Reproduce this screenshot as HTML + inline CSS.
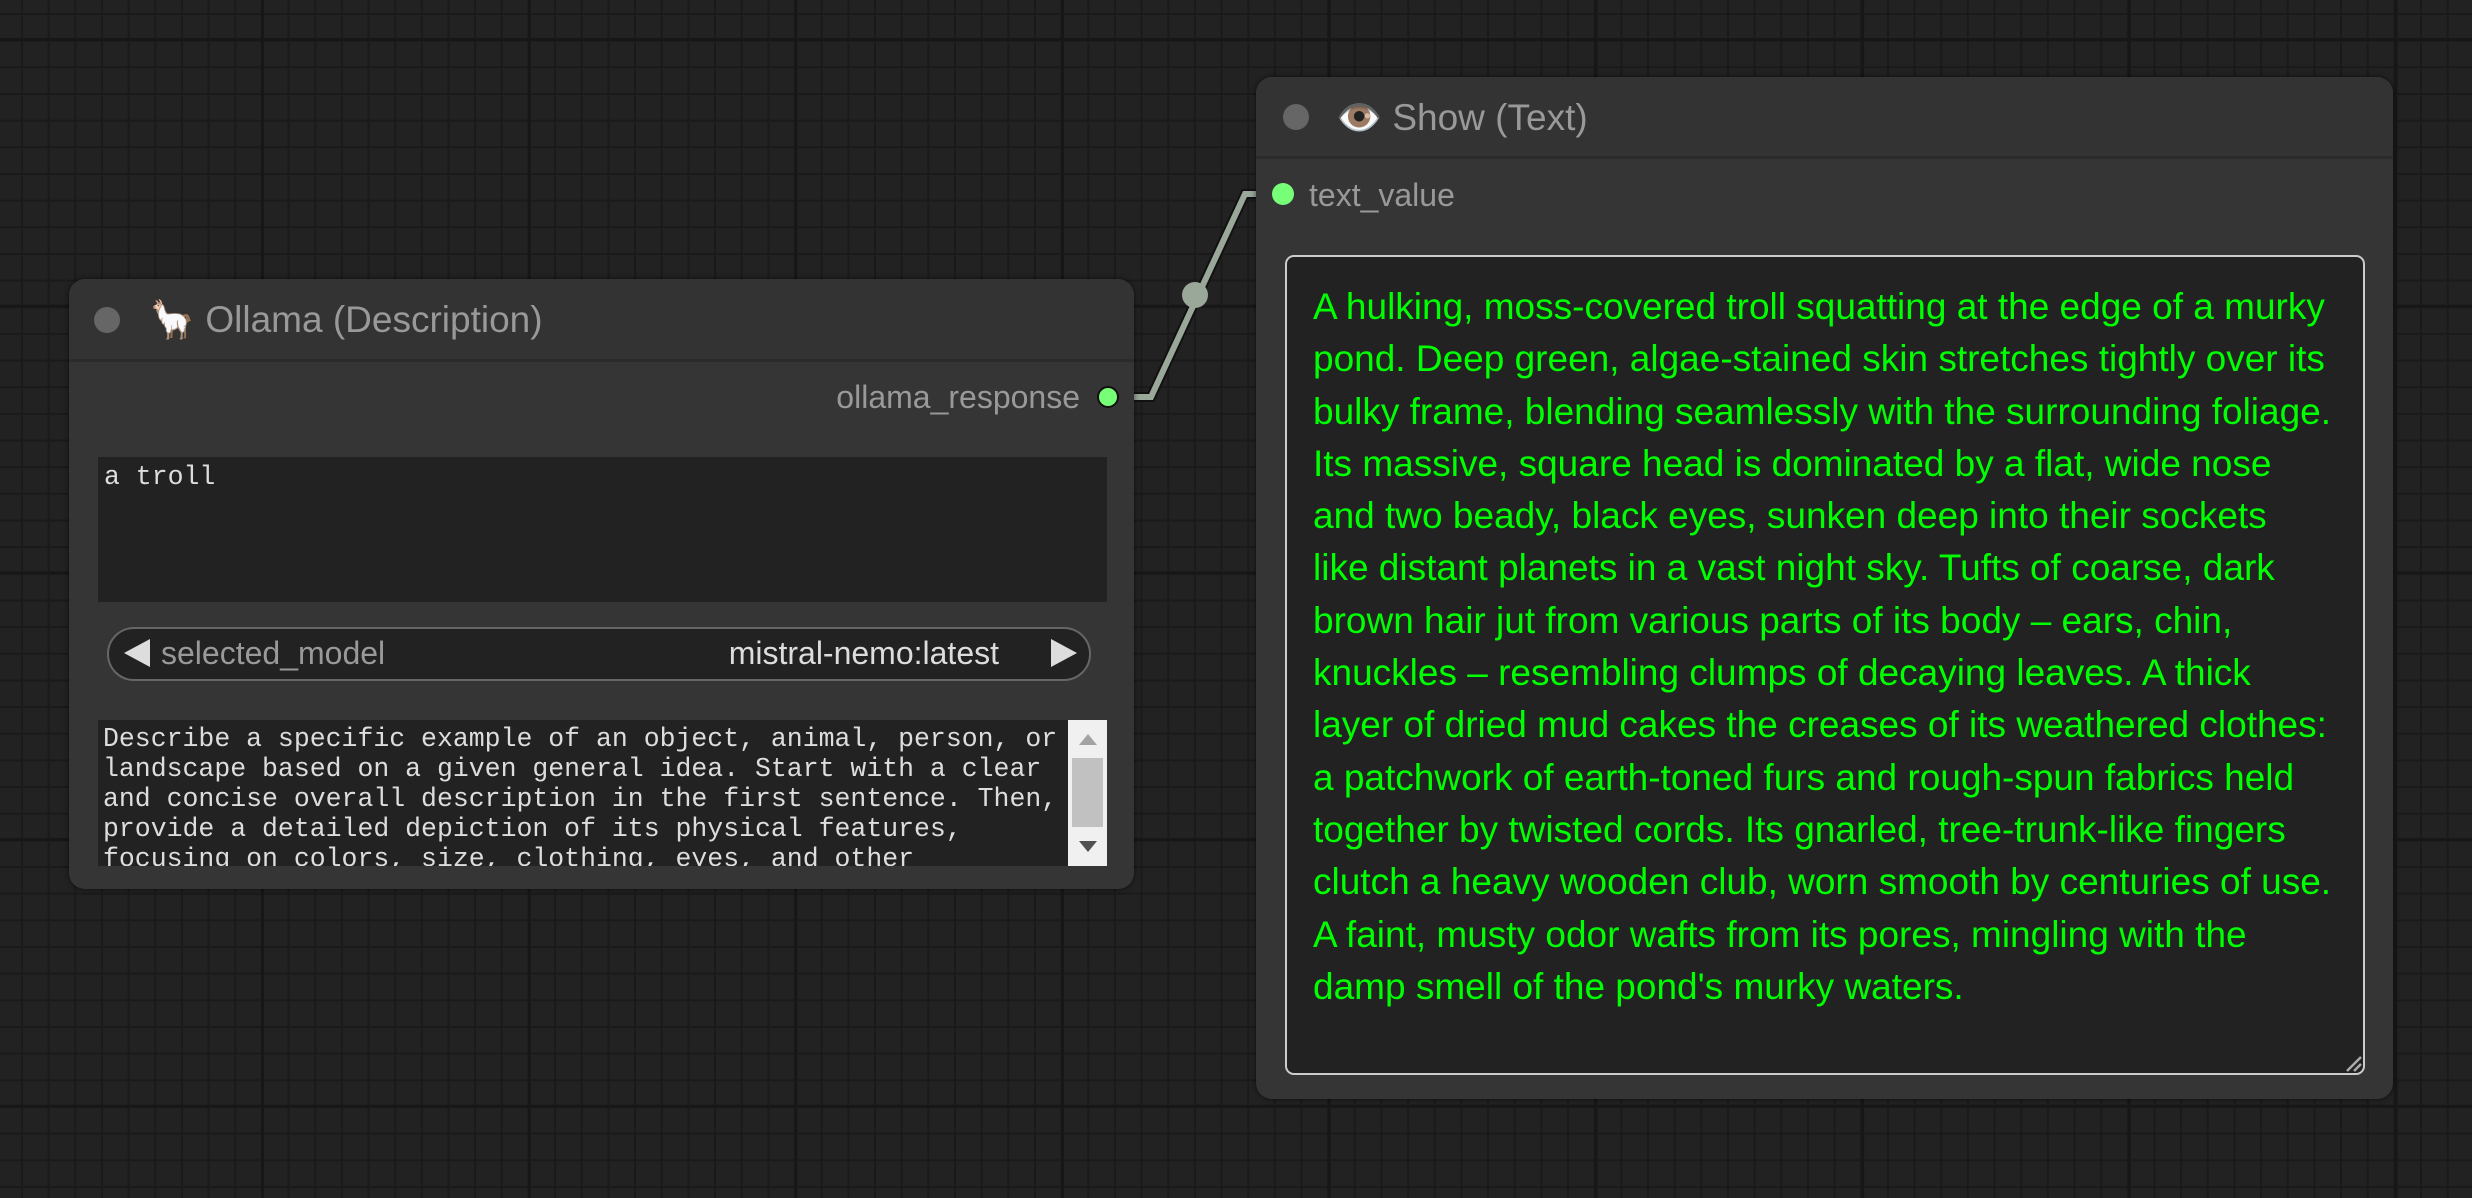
<!DOCTYPE html>
<html><head><meta charset="utf-8">
<style>
*{box-sizing:border-box;margin:0;padding:0}
html,body{width:2472px;height:1198px;overflow:hidden}
body{background-color:#222;position:relative;font-family:"Liberation Sans",sans-serif;
background-image:
linear-gradient(90deg,#171717 3px,transparent 3px),
linear-gradient(0deg,#171717 3px,transparent 3px),
linear-gradient(90deg,#1a1a1a 2px,transparent 2px),
linear-gradient(0deg,#1a1a1a 2px,transparent 2px);
background-size:266.7px 266.7px,266.7px 266.7px,26.67px 26.67px,26.67px 26.67px;
background-position:261px 0,0 41px,21px 0,0 15px;}
.node{position:absolute;background:#353535;border-radius:16px;box-shadow:0 0 6px rgba(0,0,0,.6)}
.hdr{position:absolute;left:0;right:0;top:0;background:#333;border-radius:16px 16px 0 0;border-bottom:3px solid #2b2b2b}
.dot{position:absolute;width:26px;height:26px;border-radius:50%;background:#666}
.ttl{position:absolute;color:#999;font-size:37px;white-space:nowrap}
.lbl{position:absolute;color:#999;font-size:32px;white-space:nowrap}
.mono{font-family:"Liberation Mono",monospace;color:#ddd;font-size:26.5px;line-height:30px;white-space:pre}
.gw{position:absolute;left:1313px;top:281px;color:#0f0;font-size:37px;line-height:52.3px;white-space:pre}
</style></head><body>

<svg style="position:absolute;left:0;top:0" width="2472" height="1198">
<polyline points="1110,397 1151,397 1245,194 1282,194" fill="none" stroke="#111" stroke-width="10"/>
<polyline points="1110,397 1151,397 1245,194 1282,194" fill="none" stroke="#9aa89a" stroke-width="6"/>
<circle cx="1195" cy="295" r="13" fill="#9aa89a"/>
</svg>

<!-- Left node -->
<div class="node" style="left:69px;top:279px;width:1065px;height:610px">
  <div class="hdr" style="height:83px"></div>
  <div class="dot" style="left:25px;top:28px"></div>
  <div class="ttl" style="left:80px;top:20px">🦙 Ollama (Description)</div>
  <div class="lbl" style="right:54px;top:100px">ollama_response</div>
  <div style="position:absolute;left:1028px;top:107px;width:22px;height:22px;border-radius:50%;background:#7f7;border:2px solid #111"></div>
  <div style="position:absolute;left:29px;top:178px;width:1009px;height:145px;background:#222"></div>
  <div class="mono" style="position:absolute;left:35px;top:183px">a troll</div>
  <div style="position:absolute;left:38px;top:348px;width:984px;height:54px;background:#222;border:2px solid #666;border-radius:27px"></div>
  <div style="position:absolute;left:55px;top:360px;width:0;height:0;border-top:14px solid transparent;border-bottom:14px solid transparent;border-right:26px solid #ddd"></div>
  <div style="position:absolute;left:982px;top:360px;width:0;height:0;border-top:14px solid transparent;border-bottom:14px solid transparent;border-left:26px solid #ddd"></div>
  <div class="lbl" style="left:92px;top:356px;color:#999">selected_model</div>
  <div class="lbl" style="right:135px;top:356px;color:#ddd">mistral-nemo:latest</div>
  <div style="position:absolute;left:29px;top:441px;width:1009px;height:146px;background:#222;overflow:hidden">
    <div class="mono" style="position:absolute;left:5px;top:4px">Describe a specific example of an object, animal, person, or
landscape based on a given general idea. Start with a clear
and concise overall description in the first sentence. Then,
provide a detailed depiction of its physical features,
focusing on colors, size, clothing, eyes, and other</div>
    <div style="position:absolute;left:970px;top:0;width:39px;height:146px;background:#f0f0f0">
      <div style="position:absolute;left:11px;top:14px;border-left:9px solid transparent;border-right:9px solid transparent;border-bottom:11px solid #a3a3a3"></div>
      <div style="position:absolute;left:4px;top:38px;width:31px;height:69px;background:#c1c1c1"></div>
      <div style="position:absolute;left:11px;top:121px;border-left:9px solid transparent;border-right:9px solid transparent;border-top:11px solid #505050"></div>
    </div>
  </div>
</div>

<!-- Right node -->
<div class="node" style="left:1256px;top:77px;width:1137px;height:1022px">
  <div class="hdr" style="height:82px"></div>
  <div class="dot" style="left:27px;top:27px"></div>
  <div class="ttl" style="left:80px;top:20px">👁️ Show (Text)</div>
  <div style="position:absolute;left:16px;top:106px;width:22px;height:22px;border-radius:50%;background:#7f7"></div>
  <div class="lbl" style="left:53px;top:100px">text_value</div>
  <div style="position:absolute;left:29px;top:178px;width:1080px;height:820px;background:#222;border:2px solid #ccc;border-radius:9px"></div>
</div>
<div class="gw">A hulking, moss-covered troll squatting at the edge of a murky
pond. Deep green, algae-stained skin stretches tightly over its
bulky frame, blending seamlessly with the surrounding foliage.
Its massive, square head is dominated by a flat, wide nose
and two beady, black eyes, sunken deep into their sockets
like distant planets in a vast night sky. Tufts of coarse, dark
brown hair jut from various parts of its body – ears, chin,
knuckles – resembling clumps of decaying leaves. A thick
layer of dried mud cakes the creases of its weathered clothes:
a patchwork of earth-toned furs and rough-spun fabrics held
together by twisted cords. Its gnarled, tree-trunk-like fingers
clutch a heavy wooden club, worn smooth by centuries of use.
A faint, musty odor wafts from its pores, mingling with the
damp smell of the pond's murky waters.</div>
<svg style="position:absolute;left:2345px;top:1055px" width="18" height="18"><path d="M2 16 L16 2 M9 16 L16 9" stroke="#aaa" stroke-width="2.5"/></svg>
</body></html>
